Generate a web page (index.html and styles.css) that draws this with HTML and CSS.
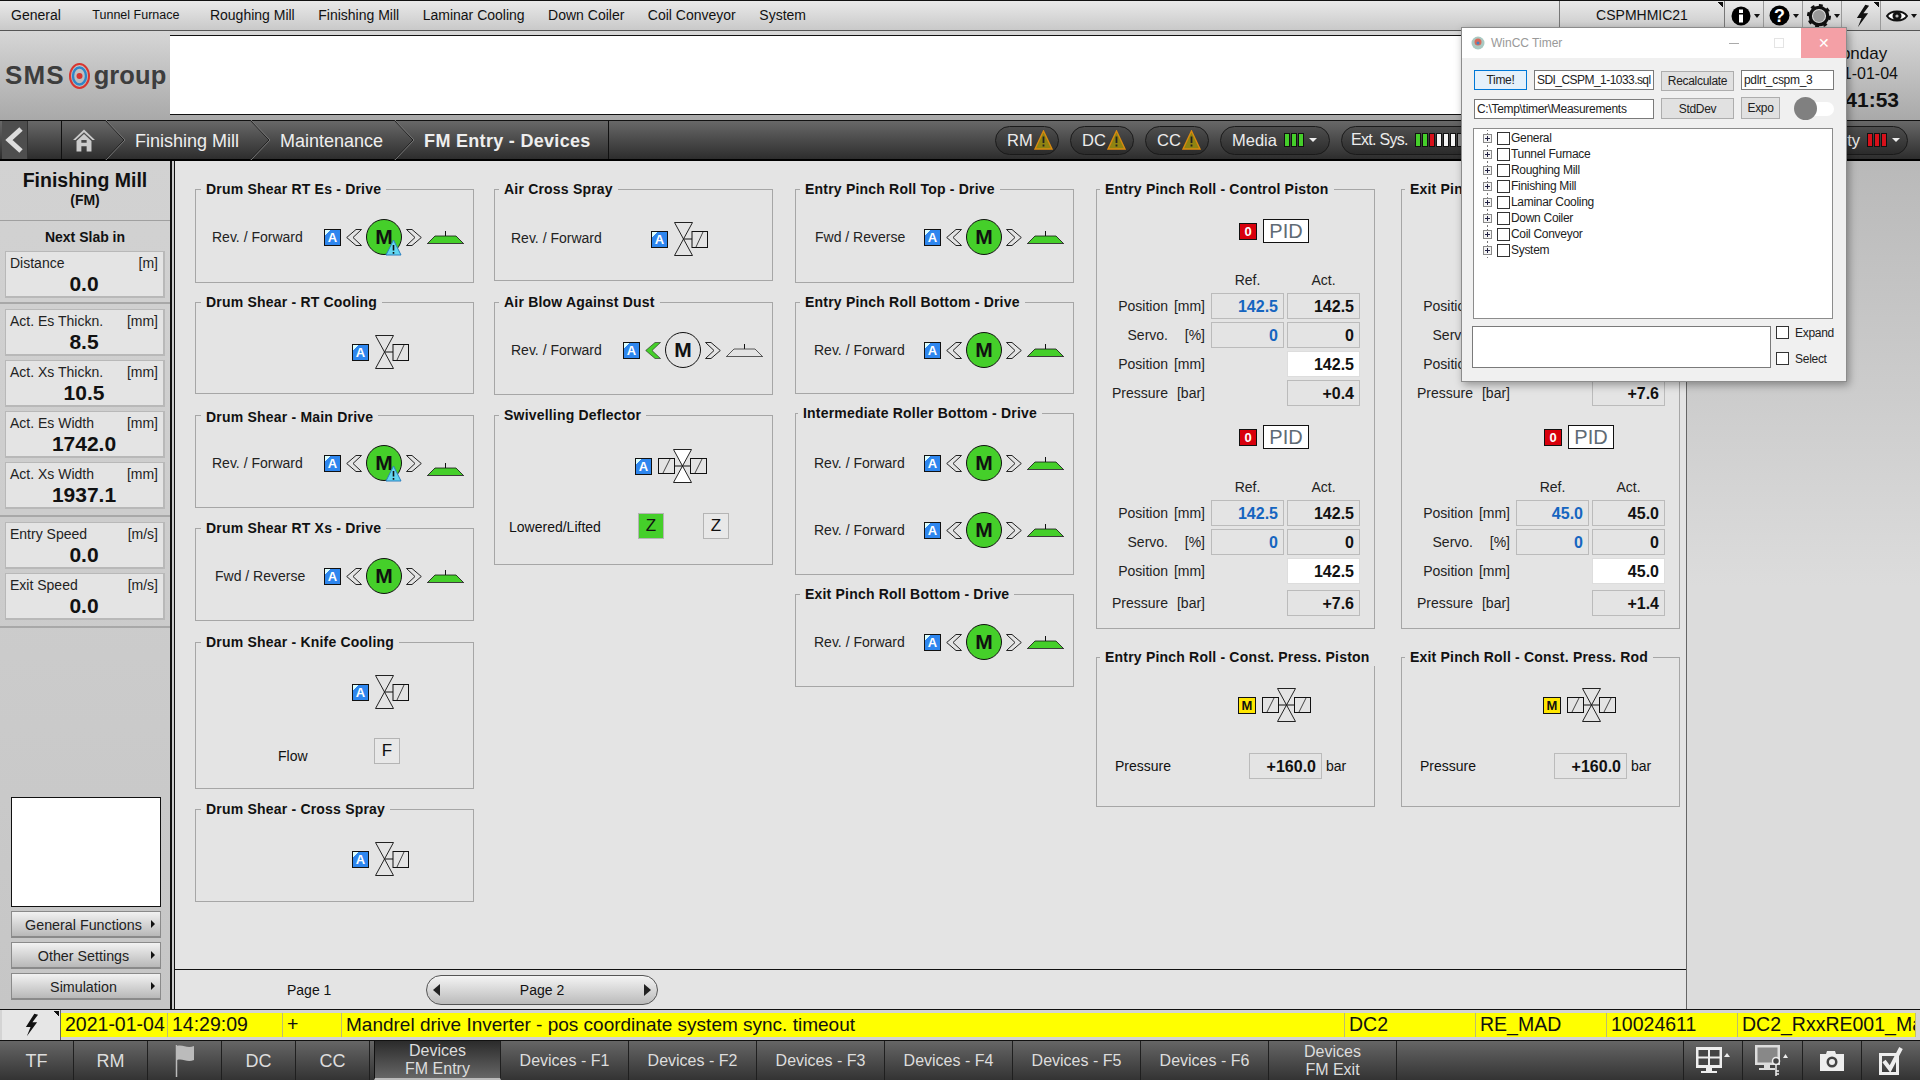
FILE: index.html
```html
<!DOCTYPE html>
<html>
<head>
  <meta charset="utf-8">
  <title>FM Entry - Devices</title>
  <link rel="stylesheet" href="styles.css">
</head>
<body>
<svg class="defs" width="0" height="0">
  <symbol id="chev-l" viewBox="0 0 16 17"><polygon points="0.7,8.5 10,0.5 15.5,0.5 7,8.5 15.5,16.5 10,16.5" fill="none" stroke="#222"/></symbol>
  <symbol id="chev-r" viewBox="0 0 16 17"><polygon points="15.3,8.5 6,0.5 0.5,0.5 9,8.5 0.5,16.5 6,16.5" fill="none" stroke="#222"/></symbol>
  <symbol id="chev-g" viewBox="0 0 16 17"><polygon points="0.7,8.5 10,0.5 15.5,0.5 7,8.5 15.5,16.5 10,16.5" fill="#45cf2a" stroke="#222" stroke-width="0.6"/></symbol>
  <symbol id="shovel" viewBox="0 0 37 13"><path d="M18.5 0V5" stroke="#111" fill="none"/><polygon points="8,5 29,5 36,12 1,12" fill="#45cf2a"/><path d="M0 12.5H37M1 12L8 5H29L36 12" stroke="#111" stroke-width="0.8" fill="none"/></symbol>
  <symbol id="shovel-off" viewBox="0 0 37 13"><path d="M18.5 0V5" stroke="#111" fill="none"/><path d="M0 12.5H37M1 12L8 5H29L36 12" stroke="#333" stroke-width="0.8" fill="none"/></symbol>
  <symbol id="valve" viewBox="0 0 34 34"><polygon points="0.5,0.5 18.5,0.5 0.5,33.5 18.5,33.5" fill="none" stroke="#222"/><path d="M9.5 17H18" stroke="#111"/><rect x="18" y="9.5" width="15.5" height="16" fill="none" stroke="#111"/><path d="M22 25L29 10" stroke="#444"/></symbol>
  <symbol id="valve2" viewBox="0 0 49 34"><polygon points="15.5,0.5 33.5,0.5 15.5,33.5 33.5,33.5" fill="none" stroke="#222"/><path d="M16 17H33" stroke="#111"/><rect x="0.5" y="9.5" width="16" height="15" fill="none" stroke="#111"/><rect x="32.5" y="9.5" width="16" height="15" fill="none" stroke="#111"/><path d="M5 24L12 10M37 24L44 10" stroke="#444"/></symbol>
  <symbol id="valve2w" viewBox="0 0 49 34"><polygon points="15.5,0.5 33.5,0.5 15.5,33.5 33.5,33.5" fill="#fff" stroke="#222"/><path d="M16 17H33" stroke="#111"/><rect x="0.5" y="9.5" width="16" height="15" fill="none" stroke="#111"/><rect x="32.5" y="9.5" width="16" height="15" fill="none" stroke="#111"/><path d="M5 24L12 10M37 24L44 10" stroke="#444"/></symbol>
  <symbol id="warn" viewBox="0 0 17 17"><polygon points="8.5,1 16,16 1,16" fill="#62d6f0" stroke="#2a7fc0"/><path d="M8.5 6V11.5M8.5 13V14.8" stroke="#111" stroke-width="1.6"/></symbol>
  <symbol id="warn-y" viewBox="0 0 19 20"><polygon points="9.5,1 18,19 1,19" fill="#8f8412" stroke="#d98a10" stroke-width="1.4"/><path d="M9.5 6.5V13M9.5 14.5V16.5" stroke="#222" stroke-width="1.8"/></symbol>
  <symbol id="crumb" viewBox="0 0 20 40"><path d="M0 0L19 20L0 40" fill="none" stroke="#1c1c1c"/><path d="M1 0L20 20L1 40" fill="none" stroke="#777"/></symbol>
  <symbol id="bolt" viewBox="0 0 16 24"><polygon points="11,0 2,14 7,14 3,24 14,9 9,9 15,1" fill="#111"/></symbol>
</svg>

<header class="menu-bar">
  <nav class="menu">
    <span>General</span>
    <span class="menu-small">Tunnel Furnace</span>
    <span>Roughing Mill</span>
    <span>Finishing Mill</span>
    <span>Laminar Cooling</span>
    <span>Down Coiler</span>
    <span>Coil Conveyor</span>
    <span>System</span>
  </nav>
  <div class="station corner">CSPMHMIC21</div>
  <div class="tool"><svg width="20" height="20" viewBox="0 0 20 20"><circle cx="10" cy="10" r="9.5" fill="#000"/><rect x="8" y="8.5" width="4" height="8" fill="#fff"/><rect x="8" y="3.5" width="4" height="3.5" fill="#fff"/></svg><i class="caret"></i></div>
  <div class="tool"><svg width="21" height="21" viewBox="0 0 20 20"><circle cx="10" cy="10" r="9.5" fill="#000"/><text x="10" y="16" class="tool-q">?</text></svg><i class="caret"></i></div>
  <div class="tool"><svg width="24" height="24" viewBox="0 0 22 22"><circle cx="11" cy="11" r="8" fill="none" stroke="#111" stroke-width="3"/><circle cx="11" cy="11" r="9.5" fill="none" stroke="#111" stroke-width="3" stroke-dasharray="3.4 4"/><circle cx="11" cy="11" r="5.5" fill="#999"/></svg><i class="caret"></i></div>
  <div class="tool corner"><svg width="15" height="24"><use href="#bolt"/></svg></div>
  <div class="tool"><svg width="22" height="14" viewBox="0 0 22 14"><path d="M1 7C5 1 17 1 21 7C17 13 5 13 1 7Z" fill="#fff" stroke="#111" stroke-width="2"/><circle cx="11" cy="7" r="4.5" fill="#111"/><circle cx="11" cy="7" r="1.6" fill="#bbb"/></svg><i class="caret"></i></div>
</header>

<section class="head">
  <div class="logo">
    <span class="logo-sms">SMS</span>
    <svg width="21" height="26" viewBox="0 0 21 26"><ellipse cx="10.5" cy="13" rx="9.5" ry="12" fill="none" stroke="#d8352f" stroke-width="2"/><ellipse cx="10.5" cy="13" rx="6.5" ry="8.5" fill="none" stroke="#2f86c8" stroke-width="2.4"/><circle cx="10.5" cy="13" r="3" fill="#d8352f"/></svg>
    <span class="logo-group">group</span>
  </div>
  <div class="head-blank"></div>
  <div class="clock">
    <div class="clock-day">Monday</div>
    <div class="clock-date">2021-01-04</div>
    <div class="clock-time">14:41:53</div>
  </div>
</section>

<nav class="crumbs">
  <div class="back"><svg width="20" height="26" viewBox="0 0 20 26"><path d="M16 2L4 13L16 24" fill="none" stroke="#ddd" stroke-width="5"/></svg></div>
  <div class="crumb-home"><svg width="25" height="25" viewBox="0 0 25 25"><polygon points="12.5,0 25,12 22,12 12.5,3 3,12 0,12" fill="#ccc"/><path d="M4 13L12.5 5L21 13V25H15.5V19H9.5V25H4Z M9.5 12H15.5V15H9.5Z" fill="#ccc" fill-rule="evenodd"/></svg></div>
  <svg class="crumb-sep" width="20" height="40"><use href="#crumb"/></svg>
  <span class="crumb-text">Finishing Mill</span>
  <svg class="crumb-sep" width="20" height="40"><use href="#crumb"/></svg>
  <span class="crumb-text">Maintenance</span>
  <svg class="crumb-sep" width="20" height="40"><use href="#crumb"/></svg>
  <span class="crumb-text crumb-now">FM Entry - Devices</span>
  <div class="pills">
    <div class="pill pill-s">RM<svg width="19" height="20"><use href="#warn-y"/></svg></div>
    <div class="pill pill-s">DC<svg width="19" height="20"><use href="#warn-y"/></svg></div>
    <div class="pill pill-s">CC<svg width="19" height="20"><use href="#warn-y"/></svg></div>
    <div class="pill pill-media">Media<span class="bars"><i class="g"></i><i class="g"></i><i class="g"></i></span><i class="pill-arrow"></i></div>
    <div class="pill pill-ext">Ext. Sys.<span class="bars"><i class="g"></i><i class="g"></i><i class="r"></i><i class="w"></i><i class="w"></i><i class="w"></i><i class="d"></i><i class="d"></i></span></div>
    <div class="pill pill-safety">Safety<span class="bars"><i class="r"></i><i class="r"></i><i class="r"></i></span><i class="pill-arrow"></i></div>
  </div>
</nav>

<div class="content">
  <aside class="side">
    <div class="side-title">
      <div class="side-name">Finishing Mill</div>
      <div class="side-code">(FM)</div>
    </div>
    <div class="side-group side-first">
      <div class="side-head">Next Slab in</div>
      <div class="stat"><div class="stat-top"><span>Distance</span><span>[m]</span></div><div class="stat-val">0.0</div></div>
    </div>
    <div class="side-group">
      <div class="stat"><div class="stat-top"><span>Act. Es Thickn.</span><span>[mm]</span></div><div class="stat-val">8.5</div></div>
      <div class="stat"><div class="stat-top"><span>Act. Xs Thickn.</span><span>[mm]</span></div><div class="stat-val">10.5</div></div>
      <div class="stat"><div class="stat-top"><span>Act. Es Width</span><span>[mm]</span></div><div class="stat-val">1742.0</div></div>
      <div class="stat"><div class="stat-top"><span>Act. Xs Width</span><span>[mm]</span></div><div class="stat-val">1937.1</div></div>
    </div>
    <div class="side-group">
      <div class="stat"><div class="stat-top"><span>Entry Speed</span><span>[m/s]</span></div><div class="stat-val">0.0</div></div>
      <div class="stat"><div class="stat-top"><span>Exit Speed</span><span>[m/s]</span></div><div class="stat-val">0.0</div></div>
    </div>
    <div class="side-bottom">
      <div class="side-white"></div>
      <button class="side-btn">General Functions<i></i></button>
      <button class="side-btn">Other Settings<i></i></button>
      <button class="side-btn">Simulation<i></i></button>
    </div>
  </aside>
  <div class="divider"></div>

  <main class="main">
    <div class="columns">
      <div class="col col-1">
        <section class="panel h94">
          <div class="panel-title">Drum Shear RT Es - Drive</div>
          <div class="row"><span class="row-label">Rev. / Forward</span><span class="badge-a">A</span><svg class="chev" width="16" height="17"><use href="#chev-l"/></svg><span class="motor on">M<svg class="motor-warn" width="17" height="17"><use href="#warn"/></svg></span><svg class="chev" width="16" height="17"><use href="#chev-r"/></svg><svg class="shovel" width="37" height="13"><use href="#shovel"/></svg></div>
        </section>
        <section class="panel h92 mt19">
          <div class="panel-title">Drum Shear - RT Cooling</div>
          <div class="row-valve"><span class="badge-a">A</span><svg class="valve" width="34" height="34"><use href="#valve"/></svg></div>
        </section>
        <section class="panel h93 mt21 panel-main">
          <div class="panel-title">Drum Shear - Main Drive</div>
          <div class="row row-main"><span class="row-label">Rev. / Forward</span><span class="badge-a">A</span><svg class="chev" width="16" height="17"><use href="#chev-l"/></svg><span class="motor on">M<svg class="motor-warn" width="17" height="17"><use href="#warn"/></svg></span><svg class="chev" width="16" height="17"><use href="#chev-r"/></svg><svg class="shovel" width="37" height="13"><use href="#shovel"/></svg></div>
        </section>
        <section class="panel h93 mt20">
          <div class="panel-title">Drum Shear RT Xs - Drive</div>
          <div class="row"><span class="row-label row-fwd">Fwd / Reverse</span><span class="badge-a">A</span><svg class="chev" width="16" height="17"><use href="#chev-l"/></svg><span class="motor on">M</span><svg class="chev" width="16" height="17"><use href="#chev-r"/></svg><svg class="shovel" width="37" height="13"><use href="#shovel"/></svg></div>
        </section>
        <section class="panel h147 mt21">
          <div class="panel-title">Drum Shear - Knife Cooling</div>
          <div class="row-valve"><span class="badge-a">A</span><svg class="valve" width="34" height="34"><use href="#valve"/></svg></div>
          <div class="row-flow"><span class="flow-label">Flow</span><span class="key">F</span></div>
        </section>
        <section class="panel h93 mt20">
          <div class="panel-title">Drum Shear - Cross Spray</div>
          <div class="row-valve"><span class="badge-a">A</span><svg class="valve" width="34" height="34"><use href="#valve"/></svg></div>
        </section>
      </div>

      <div class="col col-2">
        <section class="panel h92">
          <div class="panel-title">Air Cross Spray</div>
          <div class="row-valve row-labelled"><span class="row-label">Rev. / Forward</span><span class="badge-a">A</span><svg class="valve" width="34" height="34"><use href="#valve"/></svg></div>
        </section>
        <section class="panel h93 mt21">
          <div class="panel-title">Air Blow Against Dust</div>
          <div class="row"><span class="row-label">Rev. / Forward</span><span class="badge-a">A</span><svg class="chev" width="16" height="17"><use href="#chev-g"/></svg><span class="motor">M</span><svg class="chev" width="16" height="17"><use href="#chev-r"/></svg><svg class="shovel" width="37" height="13"><use href="#shovel-off"/></svg></div>
        </section>
        <section class="panel h150 mt20">
          <div class="panel-title">Swivelling Deflector</div>
          <div class="row-valve2"><span class="badge-a">A</span><svg class="valve" width="49" height="34"><use href="#valve2w"/></svg></div>
          <div class="row-lift"><span class="lift-label">Lowered/Lifted</span><span class="key key-on">Z</span><span class="key">Z</span></div>
        </section>
      </div>

      <div class="col col-3">
        <section class="panel h94">
          <div class="panel-title">Entry Pinch Roll Top - Drive</div>
          <div class="row"><span class="row-label row-fwd">Fwd / Reverse</span><span class="badge-a">A</span><svg class="chev" width="16" height="17"><use href="#chev-l"/></svg><span class="motor on">M</span><svg class="chev" width="16" height="17"><use href="#chev-r"/></svg><svg class="shovel" width="37" height="13"><use href="#shovel"/></svg></div>
        </section>
        <section class="panel h92 mt19">
          <div class="panel-title">Entry Pinch Roll Bottom - Drive</div>
          <div class="row"><span class="row-label row-rev">Rev. / Forward</span><span class="badge-a">A</span><svg class="chev" width="16" height="17"><use href="#chev-l"/></svg><span class="motor on">M</span><svg class="chev" width="16" height="17"><use href="#chev-r"/></svg><svg class="shovel" width="37" height="13"><use href="#shovel"/></svg></div>
        </section>
        <section class="panel h162 mt19">
          <div class="panel-title title-tight">Intermediate Roller Bottom - Drive</div>
          <div class="row row-low"><span class="row-label row-rev">Rev. / Forward</span><span class="badge-a">A</span><svg class="chev" width="16" height="17"><use href="#chev-l"/></svg><span class="motor on">M</span><svg class="chev" width="16" height="17"><use href="#chev-r"/></svg><svg class="shovel" width="37" height="13"><use href="#shovel"/></svg></div>
          <div class="row row-next"><span class="row-label row-rev">Rev. / Forward</span><span class="badge-a">A</span><svg class="chev" width="16" height="17"><use href="#chev-l"/></svg><span class="motor on">M</span><svg class="chev" width="16" height="17"><use href="#chev-r"/></svg><svg class="shovel" width="37" height="13"><use href="#shovel"/></svg></div>
        </section>
        <section class="panel h93 mt19">
          <div class="panel-title">Exit Pinch Roll Bottom - Drive</div>
          <div class="row"><span class="row-label row-rev">Rev. / Forward</span><span class="badge-a">A</span><svg class="chev" width="16" height="17"><use href="#chev-l"/></svg><span class="motor on">M</span><svg class="chev" width="16" height="17"><use href="#chev-r"/></svg><svg class="shovel" width="37" height="13"><use href="#shovel"/></svg></div>
        </section>
      </div>

      <div class="col col-4">
        <section class="panel h440">
          <div class="panel-title">Entry Pinch Roll - Control Piston</div>
          <div class="pid-row"><span class="badge-o">0</span><span class="pid">PID</span></div>
          <div class="vals">
            <span></span><span class="vals-h">Ref.</span><span class="vals-h">Act.</span>
            <span class="vlabel"><b>Position</b><em>[mm]</em></span><span class="val ref">142.5</span><span class="val">142.5</span>
            <span class="vlabel"><b>Servo.</b><em>[%]</em></span><span class="val ref">0</span><span class="val">0</span>
            <span class="vlabel"><b>Position</b><em>[mm]</em></span><span></span><span class="val input">142.5</span>
            <span class="vlabel"><b>Pressure</b><em>[bar]</em></span><span></span><span class="val">+0.4</span>
          </div>
          <div class="pid-row pid-second"><span class="badge-o">0</span><span class="pid">PID</span></div>
          <div class="vals vals-second">
            <span></span><span class="vals-h">Ref.</span><span class="vals-h">Act.</span>
            <span class="vlabel"><b>Position</b><em>[mm]</em></span><span class="val ref">142.5</span><span class="val">142.5</span>
            <span class="vlabel"><b>Servo.</b><em>[%]</em></span><span class="val ref">0</span><span class="val">0</span>
            <span class="vlabel"><b>Position</b><em>[mm]</em></span><span></span><span class="val input">142.5</span>
            <span class="vlabel"><b>Pressure</b><em>[bar]</em></span><span></span><span class="val">+7.6</span>
          </div>
        </section>
        <section class="panel h150 mt28">
          <div class="panel-title">Entry Pinch Roll - Const. Press. Piston</div>
          <div class="row-press"><span class="badge-m">M</span><svg class="valve" width="49" height="34"><use href="#valve2"/></svg></div>
          <div class="row-pressure"><span class="press-label">Pressure</span><span class="val press-val">+160.0</span><span class="press-unit">bar</span></div>
        </section>
      </div>

      <div class="col col-5">
        <section class="panel h440">
          <div class="panel-title">Exit Pinch Roll - Control Rod</div>
          <div class="pid-row"><span class="badge-o">0</span><span class="pid">PID</span></div>
          <div class="vals">
            <span></span><span class="vals-h">Ref.</span><span class="vals-h">Act.</span>
            <span class="vlabel"><b>Position</b><em>[mm]</em></span><span class="val ref">45.0</span><span class="val">45.0</span>
            <span class="vlabel"><b>Servo.</b><em>[%]</em></span><span class="val ref">0</span><span class="val">0</span>
            <span class="vlabel"><b>Position</b><em>[mm]</em></span><span></span><span class="val input">45.0</span>
            <span class="vlabel"><b>Pressure</b><em>[bar]</em></span><span></span><span class="val">+7.6</span>
          </div>
          <div class="pid-row pid-second"><span class="badge-o">0</span><span class="pid">PID</span></div>
          <div class="vals vals-second">
            <span></span><span class="vals-h">Ref.</span><span class="vals-h">Act.</span>
            <span class="vlabel"><b>Position</b><em>[mm]</em></span><span class="val ref">45.0</span><span class="val">45.0</span>
            <span class="vlabel"><b>Servo.</b><em>[%]</em></span><span class="val ref">0</span><span class="val">0</span>
            <span class="vlabel"><b>Position</b><em>[mm]</em></span><span></span><span class="val input">45.0</span>
            <span class="vlabel"><b>Pressure</b><em>[bar]</em></span><span></span><span class="val">+1.4</span>
          </div>
        </section>
        <section class="panel h150 mt28">
          <div class="panel-title">Exit Pinch Roll - Const. Press. Rod</div>
          <div class="row-press"><span class="badge-m">M</span><svg class="valve" width="49" height="34"><use href="#valve2"/></svg></div>
          <div class="row-pressure"><span class="press-label">Pressure</span><span class="val press-val">+160.0</span><span class="press-unit">bar</span></div>
        </section>
      </div>
    </div>

    <div class="pages">
      <span class="page-1">Page 1</span>
      <div class="page-2"><i class="arrow-l"></i><span>Page 2</span><i class="arrow-r"></i></div>
    </div>
  </main>
  <div class="side-right"></div>
</div>

<div class="alarm">
  <div class="alarm-btn corner"><svg width="15" height="24"><use href="#bolt"/></svg></div>
  <div class="alarm-row">
    <span class="c-date">2021-01-04</span>
    <span class="c-time">14:29:09</span>
    <span class="c-sign">+</span>
    <span class="c-msg">Mandrel drive Inverter - pos coordinate system sync. timeout</span>
    <span class="c-col">DC2</span>
    <span class="c-col">RE_MAD</span>
    <span class="c-col">10024611</span>
    <span class="c-last">DC2_RxxRE001_Ma</span>
  </div>
</div>

<footer class="tabs">
  <div class="tab tab-s tab-big">TF</div>
  <div class="tab tab-s tab-big">RM</div>
  <div class="tab tab-s"><svg width="20" height="32" viewBox="0 0 20 32"><path d="M1.5 0V32" stroke="#bbb" stroke-width="1.5"/><path d="M2 1C8 -1 12 4 19 1V15C12 18 8 13 2 15Z" fill="#bbb"/></svg></div>
  <div class="tab tab-s tab-big">DC</div>
  <div class="tab tab-s tab-big">CC</div>
  <div class="tab tab-w tab-now">Devices<br>FM Entry</div>
  <div class="tab tab-w">Devices - F1</div>
  <div class="tab tab-w">Devices - F2</div>
  <div class="tab tab-w">Devices - F3</div>
  <div class="tab tab-w">Devices - F4</div>
  <div class="tab tab-w">Devices - F5</div>
  <div class="tab tab-w">Devices - F6</div>
  <div class="tab tab-w">Devices<br>FM Exit</div>
  <div class="tab-fill"></div>
  <div class="tab tab-i"><svg width="34" height="28" viewBox="0 0 34 28"><rect x="0" y="0" width="26" height="21" fill="#eee"/><path d="M2.5 3H12V9.5H2.5ZM14 3H23.5V9.5H14ZM2.5 11.5H12V18H2.5ZM14 11.5H23.5V18H14Z" fill="#444"/><path d="M10 21H16V24H21V26H5V24H10Z" fill="#eee"/><path d="M28 10L31 6L34 10Z" fill="#eee"/></svg></div>
  <div class="tab tab-i"><svg width="34" height="32" viewBox="0 0 34 32"><rect x="0" y="0" width="25" height="20" fill="#ddd"/><rect x="2.5" y="2.5" width="20" height="15" fill="#888"/><path d="M9 20H15V23H20V25H4V23H9Z" fill="#ddd"/><circle cx="21" cy="16" r="3.5" fill="#444" stroke="#eee" stroke-width="1.5"/><path d="M21 20V31M21 26H24M21 29H24" stroke="#eee" stroke-width="1.5"/><path d="M28 13L30.5 9L33 13Z" fill="#eee"/></svg></div>
  <div class="tab tab-i"><svg width="24" height="20" viewBox="0 0 24 20"><path d="M0 3H6L7 0H15L16 3H24V20H0Z" fill="#eee"/><circle cx="12" cy="11" r="5.5" fill="#444"/><circle cx="12" cy="11" r="3" fill="#eee"/></svg></div>
  <div class="tab tab-i"><svg width="24" height="28" viewBox="0 0 24 28"><rect x="1.5" y="7.5" width="17" height="19" fill="none" stroke="#eee" stroke-width="3"/><path d="M5 14L11 22L22 1" fill="none" stroke="#eee" stroke-width="4"/></svg></div>
</footer>

<div class="win">
  <div class="win-title">
    <svg width="14" height="14" viewBox="0 0 14 14"><circle cx="7" cy="7" r="6.5" fill="#a9c9c2"/><circle cx="7" cy="6" r="3.5" fill="#d96a5a"/><circle cx="7" cy="7" r="1.5" fill="#3d86c6"/></svg>
    <span class="win-name">WinCC Timer</span>
    <i class="win-min"></i>
    <i class="win-max"></i>
    <div class="win-close">&#10005;</div>
  </div>
  <div class="win-body">
    <div class="win-form">
      <button class="w-btn w-time">Time!</button>
      <div class="w-input w-file">SDI_CSPM_1-1033.sql</div>
      <button class="w-btn w-recalc">Recalculate</button>
      <div class="w-input w-db">pdlrt_cspm_3</div>
      <div class="w-input w-path">C:\Temp\timer\Measurements</div>
      <button class="w-btn w-std">StdDev</button>
      <button class="w-btn w-expo">Expo</button>
      <div class="w-toggle"><i></i></div>
    </div>
    <div class="tree">
      <div class="tree-row"><i class="plus"></i><i class="check"></i>General</div>
      <div class="tree-row"><i class="plus"></i><i class="check"></i>Tunnel Furnace</div>
      <div class="tree-row"><i class="plus"></i><i class="check"></i>Roughing Mill</div>
      <div class="tree-row"><i class="plus"></i><i class="check"></i>Finishing Mill</div>
      <div class="tree-row"><i class="plus"></i><i class="check"></i>Laminar Cooling</div>
      <div class="tree-row"><i class="plus"></i><i class="check"></i>Down Coiler</div>
      <div class="tree-row"><i class="plus"></i><i class="check"></i>Coil Conveyor</div>
      <div class="tree-row"><i class="plus"></i><i class="check"></i>System</div>
    </div>
    <div class="win-foot">
      <div class="w-memo"></div>
      <div class="w-opts">
        <div class="w-opt"><i class="check"></i>Expand</div>
        <div class="w-opt"><i class="check"></i>Select</div>
      </div>
    </div>
  </div>
</div>
</body>
</html>
```

FILE: styles.css
```css
/* base */
* {
  box-sizing: border-box;
}
html, body {
  margin: 0;
  height: 1080px;
  overflow: hidden;
}
body {
  width: 1920px;
  display: flex;
  flex-direction: column;
  position: relative;
  font-family: "Liberation Sans", Arial, sans-serif;
  font-size: 14px;
  color: #111;
  background: #ddd;
}
i, em {
  font-style: normal;
}
.defs {
  position: absolute;
}
.corner {
  background-image: linear-gradient(225deg, #111 0 4px, transparent 4px);
  background-size: 8px 8px;
  background-position: top 1px right 1px;
  background-repeat: no-repeat;
}

/* top menu */
.menu-bar {
  height: 31px;
  display: flex;
  align-items: stretch;
  background: linear-gradient(#e9e9e9, #c9c9c9);
  border-top: 1px solid #111;
  border-bottom: 1px solid #555;
}
.menu {
  flex: 1;
  display: flex;
  align-items: center;
  gap: 23.5px;
  padding: 0 0 2px 11px;
}
.menu-small {
  font-size: 12.5px;
  margin: 0 7px 0 8px;
}
.station {
  width: 166px;
  display: flex;
  align-items: center;
  justify-content: center;
  padding-bottom: 2px;
  border-left: 1px solid #777;
  border-right: 1px solid #777;
}
.tool {
  width: 39px;
  display: flex;
  align-items: center;
  justify-content: center;
  gap: 3px;
  padding-left: 2px;
  border-right: 1px solid #999;
}
.tool:last-child {
  border-right: 0;
}
.tool-q {
  font-size: 17px;
  font-weight: bold;
  fill: #fff;
  text-anchor: middle;
}
.caret {
  width: 0;
  height: 0;
  border: 3px solid transparent;
  border-top: 4px solid #111;
  border-bottom: 0;
}

/* logo strip */
.head {
  height: 89px;
  display: flex;
  background: linear-gradient(#d6d6d6, #a9a9a9);
}
.logo {
  width: 170px;
  display: flex;
  align-items: center;
  gap: 4px;
  padding: 0 0 0 5px;
  color: #3d3d3d;
  font-weight: bold;
}
.logo-sms {
  font-size: 26px;
  letter-spacing: 1.1px;
}
.logo-group {
  font-size: 25.5px;
  letter-spacing: 0.1px;
}
.head-blank {
  width: 1624px;
  margin: 4px 0 5px;
  background: #fff;
  border-top: 1px solid #111;
  border-bottom: 1px solid #111;
}
.clock {
  flex: 1;
  text-align: center;
  padding-top: 13px;
}
.clock-day {
  font-size: 17px;
  line-height: 20px;
}
.clock-date {
  font-size: 16px;
  line-height: 20px;
}
.clock-time {
  font-size: 21px;
  font-weight: bold;
  line-height: 32px;
}

/* breadcrumb bar */
.crumbs {
  height: 41px;
  display: flex;
  align-items: center;
  background: linear-gradient(#686868, #2d2d2d);
  border-top: 1px solid #111;
  border-bottom: 2px solid #000;
  color: #eee;
}
.back {
  width: 26px;
  height: 38px;
  margin-left: 2px;
  display: flex;
  align-items: center;
  justify-content: center;
  background: #4e4e4e;
  border-right: 1px solid #333;
}
.crumb-home {
  width: 34px;
  height: 38px;
  margin-left: 33px;
  padding-left: 11px;
  display: flex;
  align-items: center;
  border-left: 1px solid #111;
}
.crumb-sep {
  margin: 0 10px 0 10px;
}
.crumb-text {
  font-size: 18px;
  padding-top: 2px;
}
.crumb-text + .crumb-sep {
  margin-left: 11px;
}
.crumb-now {
  width: 185px;
  height: 38px;
  padding-top: 0;
  line-height: 40px;
  font-weight: bold;
  letter-spacing: 0.3px;
  border-right: 1px solid #111;
}
.pills {
  flex: 1;
  display: flex;
  justify-content: flex-end;
  gap: 11px;
  padding-right: 12px;
}
.pill {
  height: 29px;
  display: flex;
  align-items: center;
  font-size: 16.5px;
  border: 1px solid #1a1a1a;
  border-radius: 15px;
  background: linear-gradient(#4e4e4e, #2b2b2b);
  color: #ececec;
}
.pill-s {
  width: 64px;
  padding-left: 11px;
  gap: 1px;
}
.pill-media {
  width: 110px;
  padding-left: 11px;
}
.pill-ext {
  width: 200px;
  padding-left: 9px;
  font-size: 16px;
  letter-spacing: -0.7px;
}
.pill-safety {
  width: 356px;
  justify-content: flex-end;
  padding-right: 7px;
}
.bars {
  display: flex;
  gap: 1px;
  margin-left: 7px;
}
.bars i {
  width: 6px;
  height: 14px;
  border: 1px solid #111;
}
.bars .g { background: #45cf2a; }
.bars .r { background: #d8101a; }
.bars .w { background: #f4f4f4; }
.bars .d { background: #8a8a8a; }
.pill-arrow {
  width: 0;
  height: 0;
  margin-left: 5px;
  border: 4px solid transparent;
  border-top: 4px solid #eee;
  border-bottom: 0;
}

/* page body */
.content {
  height: 848px;
  display: flex;
}
.side {
  width: 170px;
  display: flex;
  flex-direction: column;
  background: linear-gradient(#d2d2d2, #c6c6c6);
}
.side-title {
  height: 60px;
  text-align: center;
  font-weight: bold;
  padding-top: 7px;
  border-bottom: 1px solid #a0a0a0;
}
.side-name {
  font-size: 19.5px;
  line-height: 24px;
}
.side-code {
  font-size: 14px;
  line-height: 17px;
}
.side-head {
  height: 30px;
  line-height: 33px;
  text-align: center;
  font-weight: bold;
}
.side-group {
  display: flex;
  flex-direction: column;
  gap: 4px;
  padding: 5px 5px 6px;
  border-bottom: 2px solid #a8a8a8;
}
.side-first {
  display: block;
  padding: 0 5px 4px;
}
.stat {
  height: 47px;
  padding: 3px 5px 0 4px;
  background: #e4e4e4;
  border: 2px solid #b8b8b8;
  border-top-width: 1px;
  border-left-width: 1px;
}
.stat-top {
  display: flex;
  justify-content: space-between;
  font-size: 14px;
  line-height: 16px;
  color: #222;
}
.stat-val {
  text-align: center;
  font-size: 21px;
  font-weight: bold;
  line-height: 26px;
}
.side-bottom {
  flex: 1;
  display: flex;
  flex-direction: column;
  justify-content: flex-end;
  gap: 4px;
  padding: 0 9px 9px 11px;
}
.side-white {
  height: 110px;
  background: #fff;
  border: 1px solid #111;
}
.side-btn {
  height: 27px;
  padding: 1px 5px 0 0;
  position: relative;
  font: 14.3px "Liberation Sans", Arial, sans-serif;
  color: #222;
  border: 1px solid #8a8a8a;
  border-bottom-width: 2px;
  background: linear-gradient(#f2f2f2, #b8b8b8);
}
.side-btn i {
  position: absolute;
  top: 8px;
  right: 5px;
  width: 0;
  height: 0;
  border: 4px solid transparent;
  border-left: 4px solid #111;
  border-right: 0;
}
.divider {
  width: 5px;
  background: #ccc;
  border-left: 2px solid #111;
  border-right: 1px solid #111;
}
.main {
  width: 1512px;
  display: flex;
  flex-direction: column;
  background: #e4e4e4;
  border-right: 1px solid #666;
}
.side-right {
  flex: 1;
  background: linear-gradient(#b9b9b9, #dcdcdc 50%);
}

/* columns and panels */
.columns {
  flex: 1;
  display: flex;
  padding: 28px 0 0 20px;
}
.col {
  width: 279px;
}
.col-2 { margin-left: 20px; }
.col-3 { margin-left: 22px; }
.col-4 { margin-left: 22px; }
.col-5 { margin-left: 26px; }
.panel {
  border: 1px solid #a6a6a6;
}
.h92 { height: 92px; }
.h93 { height: 93px; }
.h94 { height: 94px; }
.h147 { height: 147px; }
.h150 { height: 150px; }
.h162 { height: 162px; }
.h440 { height: 440px; }
.mt19 { margin-top: 19px; }
.mt20 { margin-top: 20px; }
.mt21 { margin-top: 21px; }
.mt28 { margin-top: 28px; }
.panel-title {
  display: table;
  margin: -9px 0 0 5px;
  padding: 0 5px;
  height: 17px;
  line-height: 17px;
  font-weight: bold;
  letter-spacing: 0.2px;
  white-space: nowrap;
  background: #e4e4e4;
}
.col-2 .panel-title,
.col-3 .panel-title {
  margin-left: 4px;
}
.col-4 .panel-title,
.col-5 .panel-title {
  margin-left: 3px;
}
.col-3 .title-tight {
  margin-left: 2px;
}
.panel-main .panel-title {
  margin-top: -7px;
  margin-bottom: -2px;
}

/* device rows */
.row {
  height: 36px;
  margin-top: 21px;
  display: flex;
  align-items: center;
}
.row-low {
  margin-top: 23px;
}
.row-next {
  margin-top: 31px;
}
.row-label {
  width: 128px;
  padding-left: 16px;
  color: #222;
}
.row-fwd {
  padding-left: 19px;
}
.row-rev {
  padding-left: 18px;
}
.badge-a {
  width: 17px;
  height: 17px;
  line-height: 16px;
  text-align: center;
  font-size: 13px;
  font-weight: bold;
  color: #fff;
  border: 1px solid #111;
  background: linear-gradient(135deg, #dff 0 4px, #2e86ee 4px);
}
.chev {
  margin-left: 5px;
}
.motor {
  position: relative;
  width: 36px;
  height: 36px;
  margin-left: 4px;
  margin-right: -1px;
  line-height: 34px;
  text-align: center;
  font-size: 21px;
  font-weight: bold;
  border: 1px solid #111;
  border-radius: 50%;
}
.on {
  background: #45cf2a;
}
.motor-warn {
  position: absolute;
  right: -1px;
  bottom: -2px;
}
.shovel {
  margin: 0 0 0 5px;
}
.row-main .shovel {
  margin-top: 12px;
}
.row-valve {
  display: flex;
  align-items: center;
  margin-top: 24px;
  padding-left: 156px;
}
.row-valve .valve {
  margin-left: 6px;
}
.row-labelled {
  padding-left: 0;
}
.row-labelled .row-label {
  width: 156px;
  padding-bottom: 3px;
}
.row-valve2 {
  display: flex;
  align-items: center;
  margin-top: 25px;
  padding-left: 140px;
}
.row-valve2 .valve {
  margin-left: 6px;
}
.row-flow {
  display: flex;
  align-items: center;
  margin-top: 29px;
}
.flow-label {
  width: 178px;
  padding: 10px 0 0 82px;
}
.key {
  width: 26px;
  height: 26px;
  line-height: 24px;
  text-align: center;
  font-size: 17px;
  background: #e8e8e8;
  border: 1px solid #b4b4b4;
}
.key-on {
  background: #45cf2a;
}
.row-lift {
  display: flex;
  align-items: center;
  margin-top: 30px;
}
.lift-label {
  width: 143px;
  padding: 2px 0 0 14px;
}
.row-lift .key + .key {
  margin-left: 39px;
}

/* pid groups */
.pid-row {
  display: flex;
  align-items: center;
  gap: 6px;
  height: 24px;
  margin-top: 21px;
  padding-left: 142px;
}
.pid-second {
  margin-top: 19px;
}
.badge-o, .badge-m {
  width: 18px;
  height: 17px;
  line-height: 15px;
  text-align: center;
  font-size: 13px;
  font-weight: bold;
  border: 1px solid #111;
}
.badge-o {
  color: #fff;
  background: #d8000c;
}
.badge-m {
  color: #111;
  background: #ffe600;
}
.pid {
  width: 46px;
  height: 24px;
  line-height: 22px;
  text-align: center;
  font-size: 20px;
  color: #5f6b75;
  background: #fff;
  border: 1px solid #111;
}
.vals {
  display: grid;
  grid-template-columns: 114px 76px 73px;
  grid-template-rows: 19px 26px 26px 26px 26px;
  row-gap: 3px;
  align-items: end;
  margin-top: 28px;
}
.vals-second {
  margin-top: 29px;
  grid-template-rows: 19px 26px 26px 26px 29px;
}
.vals-h {
  padding-top: 1px;
  text-align: center;
  margin-right: 3px;
  color: #222;
  align-self: start;
}
.vals-h + .vals-h {
  margin-right: 0;
}
.vlabel {
  display: flex;
  align-items: center;
  justify-content: flex-end;
  height: 26px;
  padding-right: 6px;
  color: #222;
}
.vlabel b {
  font-weight: normal;
}
.vlabel em {
  width: 37px;
  text-align: right;
}
.val {
  height: 26px;
  padding-right: 5px;
  line-height: 25px;
  text-align: right;
  font-size: 16px;
  font-weight: bold;
  background: #e4e4e4;
  border: 1px solid #bbb;
}
.ref {
  margin-right: 3px;
  color: #1565c0;
}
.input {
  background: #fff;
  border-color: #ddd;
}
.row-press {
  display: flex;
  align-items: center;
  gap: 6px;
  margin-top: 22px;
  padding-left: 141px;
}
.row-pressure {
  display: flex;
  align-items: center;
  margin-top: 31px;
  padding-left: 18px;
}
.press-label {
  width: 134px;
}
.press-val {
  width: 73px;
}
.press-unit {
  margin-left: 4px;
}

/* page switcher */
.pages {
  height: 40px;
  display: flex;
  align-items: center;
  border-top: 1px solid #111;
  padding-left: 112px;
}
.page-1 {
  width: 139px;
}
.page-2 {
  width: 232px;
  height: 30px;
  padding: 0 6px;
  display: flex;
  align-items: center;
  justify-content: space-between;
  border: 1px solid #555;
  border-radius: 15px;
  background: linear-gradient(#f4f4f4, #bbb);
}
.arrow-l, .arrow-r {
  width: 0;
  height: 0;
  border: 6px solid transparent;
}
.arrow-l {
  border-right: 7px solid #222;
  border-left: 0;
}
.arrow-r {
  border-left: 7px solid #222;
  border-right: 0;
}

/* alarm line */
.alarm {
  height: 32px;
  display: flex;
  background: #d4d4d4;
  border-top: 1px solid #111;
  border-bottom: 1px solid #111;
}
.alarm-btn {
  flex: none;
  width: 59px;
  margin-left: 2px;
  display: flex;
  align-items: center;
  justify-content: center;
  background-color: #e6e6e6;
  border-right: 1px solid #666;
}
.alarm-row {
  flex: 1;
  min-width: 0;
  height: 24px;
  margin: 3px 4px 0 0;
  display: flex;
  background: #ff0;
  font-size: 19.5px;
  line-height: 23px;
  color: #111;
}
.alarm-row span {
  flex: none;
  padding-left: 4px;
  border-right: 1px solid #bdbd70;
  overflow: hidden;
  white-space: nowrap;
}
.c-date { width: 107px; }
.c-time { width: 115px; }
.c-sign { width: 59px; }
.c-msg { width: 1003px; font-size: 19px; }
.c-col { width: 131px; }
.alarm-row .c-last { flex: 1; min-width: 0; }

/* bottom tabs */
.tabs {
  flex: 1;
  display: flex;
  background: linear-gradient(#666, #333);
  color: #ddd;
}
.tab {
  display: flex;
  align-items: center;
  justify-content: center;
  text-align: center;
  font-size: 16px;
  line-height: 18px;
  border-right: 1px solid #1f1f1f;
}
.tab-s {
  width: 74px;
}
.tab-big {
  font-size: 18px;
}
.tab-w {
  width: 128px;
}
.tab-s + .tab-w {
  margin-left: 4px;
  width: 127px;
  border-left: 1px solid #111;
}
.tab-now {
  background: linear-gradient(#2b2b2b, #666);
  border-bottom: 2px solid #bbb;
}
.tab-fill {
  width: 287px;
  border-right: 1px solid #1f1f1f;
}
.tab-i {
  flex: 1;
}
.tab-i:last-child {
  border-right: 0;
}

/* floating timer window */
.win {
  position: absolute;
  left: 1461px;
  top: 27px;
  width: 386px;
  height: 355px;
  display: flex;
  flex-direction: column;
  background: #f0f0f0;
  border: 1px solid #8c8c8c;
  box-shadow: 2px 3px 8px rgba(0, 0, 0, 0.35);
  font-size: 12px;
  letter-spacing: -0.3px;
  color: #222;
}
.win-title {
  height: 30px;
  display: flex;
  align-items: center;
  padding-left: 9px;
  background: #fff;
}
.win-name {
  margin-left: 6px;
  width: 238px;
  font-size: 12px;
  letter-spacing: 0;
  color: #999;
}
.win-min {
  width: 10px;
  border-top: 1px solid #aaa;
}
.win-max {
  width: 10px;
  height: 10px;
  margin-left: 35px;
  border: 1px solid #e4e4e4;
}
.win-close {
  width: 45px;
  height: 30px;
  margin-left: auto;
  line-height: 30px;
  text-align: center;
  font-size: 14px;
  color: #fff;
  background: #f4a0a6;
}
.win-body {
  flex: 1;
  padding: 12px 12px 0 10px;
}
.win-form {
  display: grid;
  grid-template-columns: 53px 120px 73px 39px 53px;
  grid-template-rows: 21px 21px;
  column-gap: 7px;
  row-gap: 7px;
  padding-left: 2px;
}
.w-btn {
  padding: 0;
  font: 12px "Liberation Sans", Arial, sans-serif;
  letter-spacing: -0.3px;
  color: #222;
  background: #e1e1e1;
  border: 1px solid #adadad;
}
.w-input {
  height: 20px;
  line-height: 18px;
  padding-left: 2px;
  background: #fff;
  border: 1px solid #7a7a7a;
  white-space: nowrap;
  overflow: hidden;
}
.w-file {
  letter-spacing: -0.55px;
}
.w-time {
  height: 20px;
  background: #e5f1fb;
  border-color: #0078d7;
}
.w-recalc {
  margin-top: 1px;
}
.w-db {
  grid-column: 4 / 6;
  width: 93px;
}
.w-path {
  grid-column: 1 / 3;
  margin-top: 1px;
}
.w-expo {
  margin-top: -1px;
}
.w-toggle {
  width: 40px;
  height: 14px;
  margin: 4px 0 0 7px;
  border-radius: 7px;
  background: #fff;
}
.w-toggle i {
  display: block;
  width: 23px;
  height: 23px;
  margin-top: -4px;
  position: relative;
  top: -1px;
  border-radius: 50%;
  background: #808080;
}
.tree {
  height: 191px;
  margin: 9px 1px 0 1px;
  padding-top: 1px;
  background: #fff;
  border: 1px solid #8c8c8c;
}
.tree-row {
  height: 16px;
  display: flex;
  align-items: center;
  padding-left: 9px;
  white-space: nowrap;
  background: repeating-linear-gradient(#777 0 1px, transparent 1px 3px) 13px 0 / 1px 100% no-repeat;
}
.plus {
  width: 9px;
  height: 9px;
  margin-right: 5px;
  border: 1px solid #8a8a8a;
  background:
    linear-gradient(#224, #224) center / 5px 1px no-repeat,
    linear-gradient(#224, #224) center / 1px 5px no-repeat,
    #f4f4f4;
}
.check {
  width: 13px;
  height: 13px;
  margin-right: 1px;
  background: #fff;
  border: 1px solid #333;
}
.win-foot {
  display: flex;
  margin-top: 7px;
}
.w-memo {
  width: 301px;
  height: 42px;
  background: #fff;
  border: 1px solid #7a7a7a;
}
.w-opts {
  margin-left: 5px;
}
.w-opt {
  height: 13px;
  margin-bottom: 13px;
  display: flex;
  align-items: center;
}
.w-opt .check {
  margin-right: 6px;
}
```
